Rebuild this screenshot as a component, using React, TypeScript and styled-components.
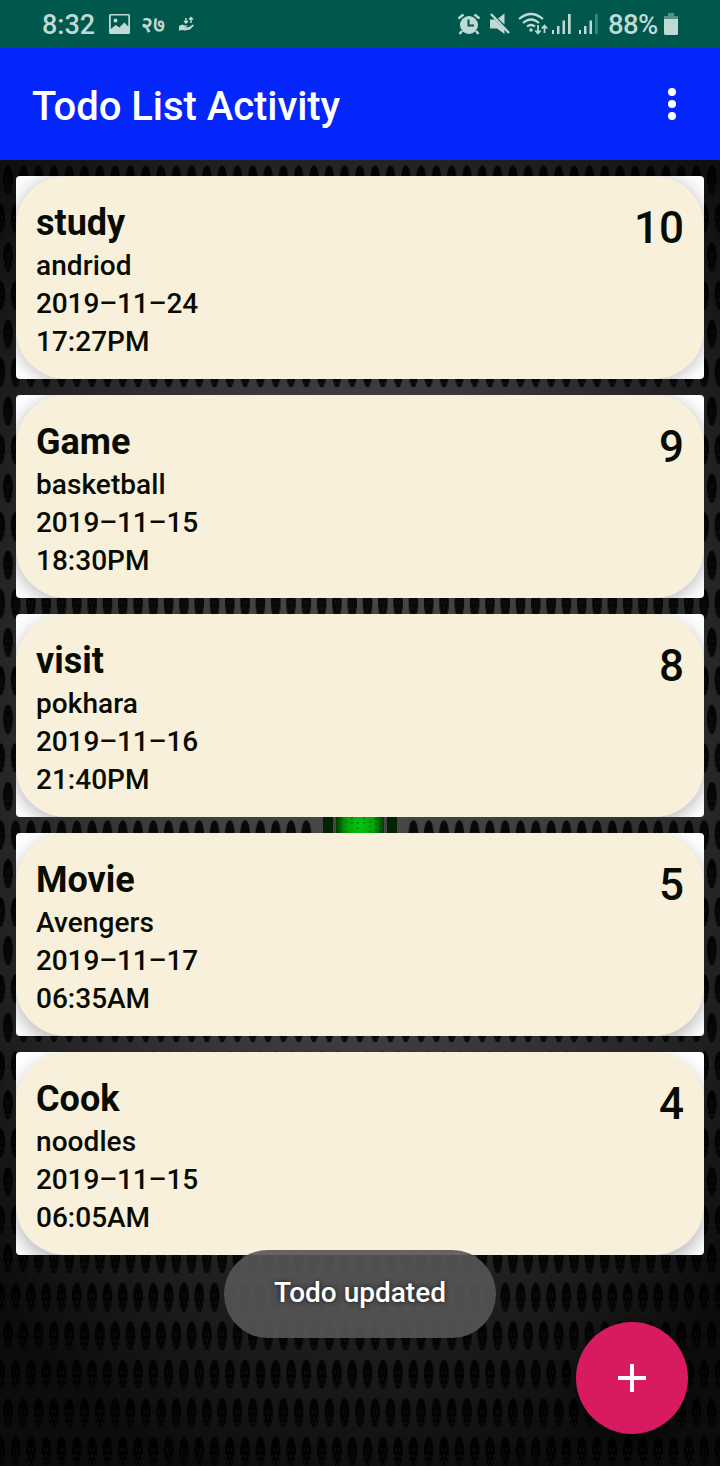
import React from "react";
import styled, { createGlobalStyle } from "styled-components";

const GlobalStyle = createGlobalStyle`
  * { box-sizing: border-box; }
  body { margin: 0; background: #000; font-family: Roboto, "Noto Sans", sans-serif; }
`;

const Screen = styled.div`
  position: relative;
  width: 720px;
  height: 1466px;
  overflow: hidden;
  display: flex;
  flex-direction: column;
`;

const StatusBar = styled.header`
  height: 48px;
  flex: none;
  background: #00574b;
  color: #bfd9d5;
  display: flex;
  align-items: center;
  justify-content: space-between;
  padding: 2px 42px 0 42px;
  font-size: 27px;
  line-height: 48px;
`;

const StatusGroup = styled.div`
  display: flex;
  align-items: center;
`;

const Icon = styled.svg<{ $gap?: number }>`
  display: block;
  flex: none;
  margin: 0 0 2px ${(p) => p.$gap ?? 0}px;
`;

const Clock = styled.span`
  width: 67px;
  font-weight: 500;
  font-size: 27px;
`;

const DateBadge = styled.span`
  width: 25px;
  margin-left: 11px;
  font-size: 22px;
  font-weight: 600;
  line-height: 40px;
`;

const Percent = styled.span`
  width: 50px;
  margin: 0 6px 0 9px;
  font-size: 27.5px;
  font-weight: 500;
  letter-spacing: -0.6px;
  white-space: nowrap;
`;

const AppBar = styled.div`
  height: 112px;
  flex: none;
  background: #0426fa;
  display: flex;
  align-items: center;
  justify-content: space-between;
  padding: 4px 44px 0 32px;
`;

const Title = styled.h1`
  margin: 2px 0 0;
  color: #fff;
  font-size: 40px;
  font-weight: 500;
  line-height: 48px;
  letter-spacing: -0.05px;
`;

const MenuButton = styled.button`
  border: 0;
  padding: 0;
  margin-top: -4px;
  background: none;
  width: 8px;
  height: 32px;
  display: flex;
  flex-direction: column;
  justify-content: space-between;
`;

const Dot = styled.i`
  width: 8px;
  height: 8px;
  border-radius: 50%;
  background: #fff;
`;

const Content = styled.main`
  position: relative;
  flex: 1;
`;

const Backdrop = styled.svg`
  position: absolute;
  inset: 0;
  display: block;
`;

const List = styled.div`
  position: relative;
  display: flex;
  flex-direction: column;
  gap: 16px;
  padding: 16px;
`;

const Card = styled.article`
  height: 203px;
  background: #fff;
  border-radius: 4px;
  overflow: hidden;
`;

const CardBody = styled.div<{ $depth: number }>`
  height: 203px;
  padding: 25px 20px 0;
  display: flex;
  justify-content: space-between;
  border-radius: 50px;
  background: #f9f0dc;
  color: #080c02;
  box-shadow: 0 ${(p) => p.$depth}px 18px rgba(0, 0, 0, 0.28);
`;

const Name = styled.h2`
  margin: 0 0 1px;
  font-size: 36px;
  font-weight: 700;
  line-height: 45px;
`;

const Line = styled.p<{ $tracking?: number }>`
  margin: 0;
  font-size: 28px;
  font-weight: 500;
  line-height: 38px;
  letter-spacing: ${(p) => p.$tracking ?? 0}px;
`;

const Priority = styled.span`
  font-size: 44px;
  font-weight: 500;
  line-height: 54px;
`;

const Toast = styled.div`
  position: absolute;
  left: 224px;
  top: 1250px;
  width: 272px;
  height: 88px;
  border-radius: 44px;
  background: rgba(86, 86, 86, 0.91);
  color: #fff;
  font-size: 28px;
  font-weight: 500;
  line-height: 86px;
  text-align: center;
  text-shadow: 0 0 5px rgba(0, 0, 0, 0.7);
`;

const Fab = styled.button`
  position: absolute;
  left: 576px;
  top: 1322px;
  width: 112px;
  height: 112px;
  padding: 0;
  border: 0;
  border-radius: 50%;
  background: #d81b60;
  display: grid;
  place-items: center;
  box-shadow: 0 6px 12px rgba(0, 0, 0, 0.4);
`;

const todos = [
  { name: "study", note: "andriod", date: "2019–11–24", time: "17:27PM", priority: 10 },
  { name: "Game", note: "basketball", date: "2019–11–15", time: "18:30PM", priority: 9 },
  { name: "visit", note: "pokhara", date: "2019–11–16", time: "21:40PM", priority: 8 },
  { name: "Movie", note: "Avengers", date: "2019–11–17", time: "06:35AM", priority: 5 },
  { name: "Cook", note: "noodles", date: "2019–11–15", time: "06:05AM", priority: 4 },
];

const Hole = ({ x, y }: { x: number; y: number }) => (
  <g transform={`translate(${x} ${y})`}>
    <path d="M0-14.500C3.300-14.500 4.800-7 4.800-1C4.800 5 4 9 2.800 11.500L1.600 14.500H-1.600L-2.800 11.500C-4 9-4.800 5-4.800-1C-4.800-7-3.300-14.500 0-14.500Z" fill="#000" fillOpacity=".88" />
    <path d="M-1.500-3V0M1.500-3V0M-3.500 4V7M0 3V7M3.500 4V7M-1.500 9V12M1.500 9V12M0 13V15" stroke="#555" strokeWidth=".8" opacity=".25" />
  </g>
);

const Mesh = () => (
  <Backdrop width="720" height="1306" viewBox="0 160 720 1306">
    <defs>
      <radialGradient id="glow" gradientUnits="userSpaceOnUse" cx="0" cy="0" r="1" gradientTransform="translate(360 720) scale(530 790)">
        <stop offset="0" stopColor="#4a4a4a" />
        <stop offset=".4" stopColor="#3d3d3d" />
        <stop offset=".75" stopColor="#202020" />
        <stop offset="1" stopColor="#0c0c0c" />
      </radialGradient>
      <radialGradient id="lamp">
        <stop offset="0" stopColor="#04c80c" />
        <stop offset=".6" stopColor="#04a00a" />
        <stop offset="1" stopColor="#013c03" />
      </radialGradient>
      <pattern id="holes" patternUnits="userSpaceOnUse" x=".35" y="161" width="15.3" height="77.05">
        <Hole x={7.65} y={19} />
        <Hole x={0} y={57.5} />
        <Hole x={15.3} y={57.5} />
      </pattern>
    </defs>
    <rect y="160" width="720" height="1306" fill="url(#glow)" />
    <rect y="160" width="720" height="1306" fill="url(#holes)" />
    <rect x="313" y="810" width="94" height="30" fill="#464646" />
    <rect x="323" y="810" width="10" height="30" fill="#022204" />
    <rect x="387" y="810" width="10" height="30" fill="#022204" />
    <rect x="336" y="796" width="48" height="58" fill="url(#lamp)" />
    <path d="M340 818V832M346 821V832M352 817V824M358 822V832M364 817V824M370 821V832M376 818V832M380 821V832" stroke="#003b00" strokeDasharray="2 3" opacity=".6" />
  </Backdrop>
);

const SignalIcon = ({ weak = false, gap }: { weak?: boolean; gap: number }) => (
  <Icon $gap={gap} width="21" height="22" viewBox="0 0 21 22" fill="currentColor">
    <path d="M1 17h2v4H1zM6 13h2.500v8H6zM11.500 7.500H14V21h-2.500z" />
    <path d="M17 1h2.700v20H17z" opacity={weak ? 0.35 : 1} />
  </Icon>
);

export default function App() {
  return (
    <Screen>
      <GlobalStyle />
      <StatusBar>
        <StatusGroup>
          <Clock>8:32</Clock>
          <Icon width="21" height="20" viewBox="0 0 21 20">
            <path fill="currentColor" fillRule="evenodd" d="M1.500 0h18Q21 0 21 1.500v17q0 1.500-1.500 1.500h-18Q0 20 0 18.500v-17Q0 0 1.500 0ZM1.800 1.500V15l5-4 3.500 2.500 5-5 4 4V1.500ZM6.500 4.500a2 2 0 1 1 0 4 2 2 0 0 1 0-4Z" />
          </Icon>
          <DateBadge>२७</DateBadge>
          <Icon $gap={13} width="16" height="16" viewBox="0 0 16 16" fill="none" stroke="currentColor">
            <path d="M0 10l3-1.500 3 1h3l-3 2 4-.5 4-2.500 1 1-4 4-5 1-3-.5-3 .8Z" fill="currentColor" stroke="none" />
            <path d="M7 2v5M5 5l2 2 2-2M12 7V1.500M10 3.500l2-2 2 2" strokeWidth="1.500" />
          </Icon>
        </StatusGroup>
        <StatusGroup>
          <Icon width="24" height="22" viewBox="0 0 24 22">
            <circle cx="12" cy="12" r="9" fill="currentColor" />
            <path d="M1.500 5.500l5-4M22.500 5.500l-5-4M5 18l-2.500 3M19 18l2.500 3" stroke="currentColor" strokeWidth="2.500" />
            <path d="M11.500 6.500V12.500H17" fill="none" stroke="#00574b" strokeWidth="2" />
          </Icon>
          <Icon $gap={8} width="22" height="22" viewBox="0 0 22 22" fill="currentColor">
            <path d="M1 6.500h4.500L15.500 16.500V21L8 15.500H1ZM9 5.500L15.500 .5v11Z" />
            <path d="M2 1l18 19" stroke="currentColor" strokeWidth="2.500" />
          </Icon>
          <Icon $gap={7} width="30" height="24" viewBox="0 0 30 24" fill="none" stroke="currentColor" strokeWidth="2.200">
            <path d="M1 7Q13-3 25 7M5 11Q13 4 21 11M9 14.500Q13 11.500 17 14.500" />
            <circle cx="13" cy="18" r="1.800" fill="currentColor" stroke="none" />
            <path d="M20 13v8M17.300 18.500L20 21.500l2.700-3M26.500 21v-7.500M23.800 16.500l2.700-3 2.700 3" strokeWidth="1.800" />
          </Icon>
          <SignalIcon gap={3} />
          <SignalIcon gap={6} weak />
          <Percent>88%</Percent>
          <Icon width="14" height="22" viewBox="0 0 14 22" fill="currentColor">
            <path d="M4 0h6v3h4v3H0V3h4Z" opacity=".45" />
            <path d="M0 6h14v14.500q0 1.500-1.500 1.500h-11Q0 22 0 20.500Z" />
          </Icon>
        </StatusGroup>
      </StatusBar>
      <AppBar>
        <Title>Todo List Activity</Title>
        <MenuButton aria-label="More options"><Dot /><Dot /><Dot /></MenuButton>
      </AppBar>
      <Content>
        <Mesh />
        <List>
          {todos.map((t, i) => (
            <Card key={t.name}>
              <CardBody $depth={2 + i * 1.5}>
                <div>
                  <Name>{t.name}</Name>
                  <Line $tracking={0.07}>{t.note}</Line>
                  <Line $tracking={-0.12}>{t.date}</Line>
                  <Line>{t.time}</Line>
                </div>
                <Priority>{t.priority}</Priority>
              </CardBody>
            </Card>
          ))}
        </List>
      </Content>
      <Toast>Todo updated</Toast>
      <Fab aria-label="Add todo">
        <svg width="28" height="28" viewBox="0 0 28 28"><path d="M12 0h4v12h12v4H16v12h-4V16H0v-4h12Z" fill="#fff" /></svg>
      </Fab>
    </Screen>
  );
}
